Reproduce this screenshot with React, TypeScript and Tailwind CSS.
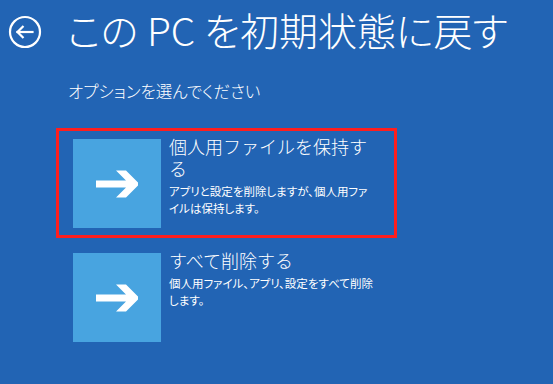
import { useState } from 'react';

interface ResetOption {
  id: string;
  title: string;
  description: string;
}

const OPTIONS: ResetOption[] = [
  {
    id: 'keep',
    title: '個人用ファイルを保持する',
    description: 'アプリと設定を削除しますが、個人用ファイルは保持します。',
  },
  {
    id: 'remove',
    title: 'すべて削除する',
    description: '個人用ファイル、アプリ、設定をすべて削除します。',
  },
];

function BackIcon() {
  return (
    <svg width="34" height="34" viewBox="0 0 34 34" fill="none" stroke="white" strokeWidth="2.2">
      <circle cx="17" cy="17" r="15" />
      <path d="M9.5 17h15" strokeLinecap="square" />
      <path d="M15.5 11l-6 6 6 6" strokeLinejoin="miter" />
    </svg>
  );
}

function ArrowIcon() {
  return (
    <svg width="42" height="32" viewBox="0 0 42 32" fill="white">
      <path d="M0 12.5h30L20 2.5h10l13.5 13.5L30 29.5H20l10-10H0z" />
    </svg>
  );
}

export default function App() {
  const [selected, setSelected] = useState('keep');

  return (
    <div className="w-[553px] h-[384px] overflow-hidden bg-[#2264b4] text-white font-['Noto_Sans_CJK_JP','Noto_Sans',sans-serif]">
      <header className="flex items-center pl-[8px] pt-[13px]">
        <button className="w-[34px] h-[34px] flex items-center justify-center">
          <BackIcon />
        </button>
        <h1 className="ml-[25px] text-[39px] leading-[44px] font-light -mt-[6px] [font-feature-settings:'palt']">
          この PC を初期状態に戻す
        </h1>
      </header>

      <p className="ml-[68px] mt-[30px] text-[16.5px] leading-[20px] font-light [font-feature-settings:'palt']">
        オプションを選んでください
      </p>

      <div className="ml-[56px] mt-[27px] flex flex-col gap-[4px]">
        {OPTIONS.map((opt) => (
          <button
            key={opt.id}
            onClick={() => setSelected(opt.id)}
            className={
              'w-[341px] flex items-start gap-[8px] pl-[14px] pt-[8px] pb-[7px] border-[3px] text-left ' +
              (selected === opt.id ? 'border-[#ff1e1e]' : 'border-transparent')
            }
          >
            <div className="w-[88px] h-[89px] shrink-0 bg-[#48a4e0] flex items-center justify-center">
              <ArrowIcon />
            </div>
            <div className="w-[205px] -mt-[4px]">
              <div className="text-[18px] leading-[22px] font-light">{opt.title}</div>
              <div className="mt-[4px] text-[11.5px] leading-[17px] [font-feature-settings:'palt']">
                {opt.description}
              </div>
            </div>
          </button>
        ))}
      </div>
    </div>
  );
}
